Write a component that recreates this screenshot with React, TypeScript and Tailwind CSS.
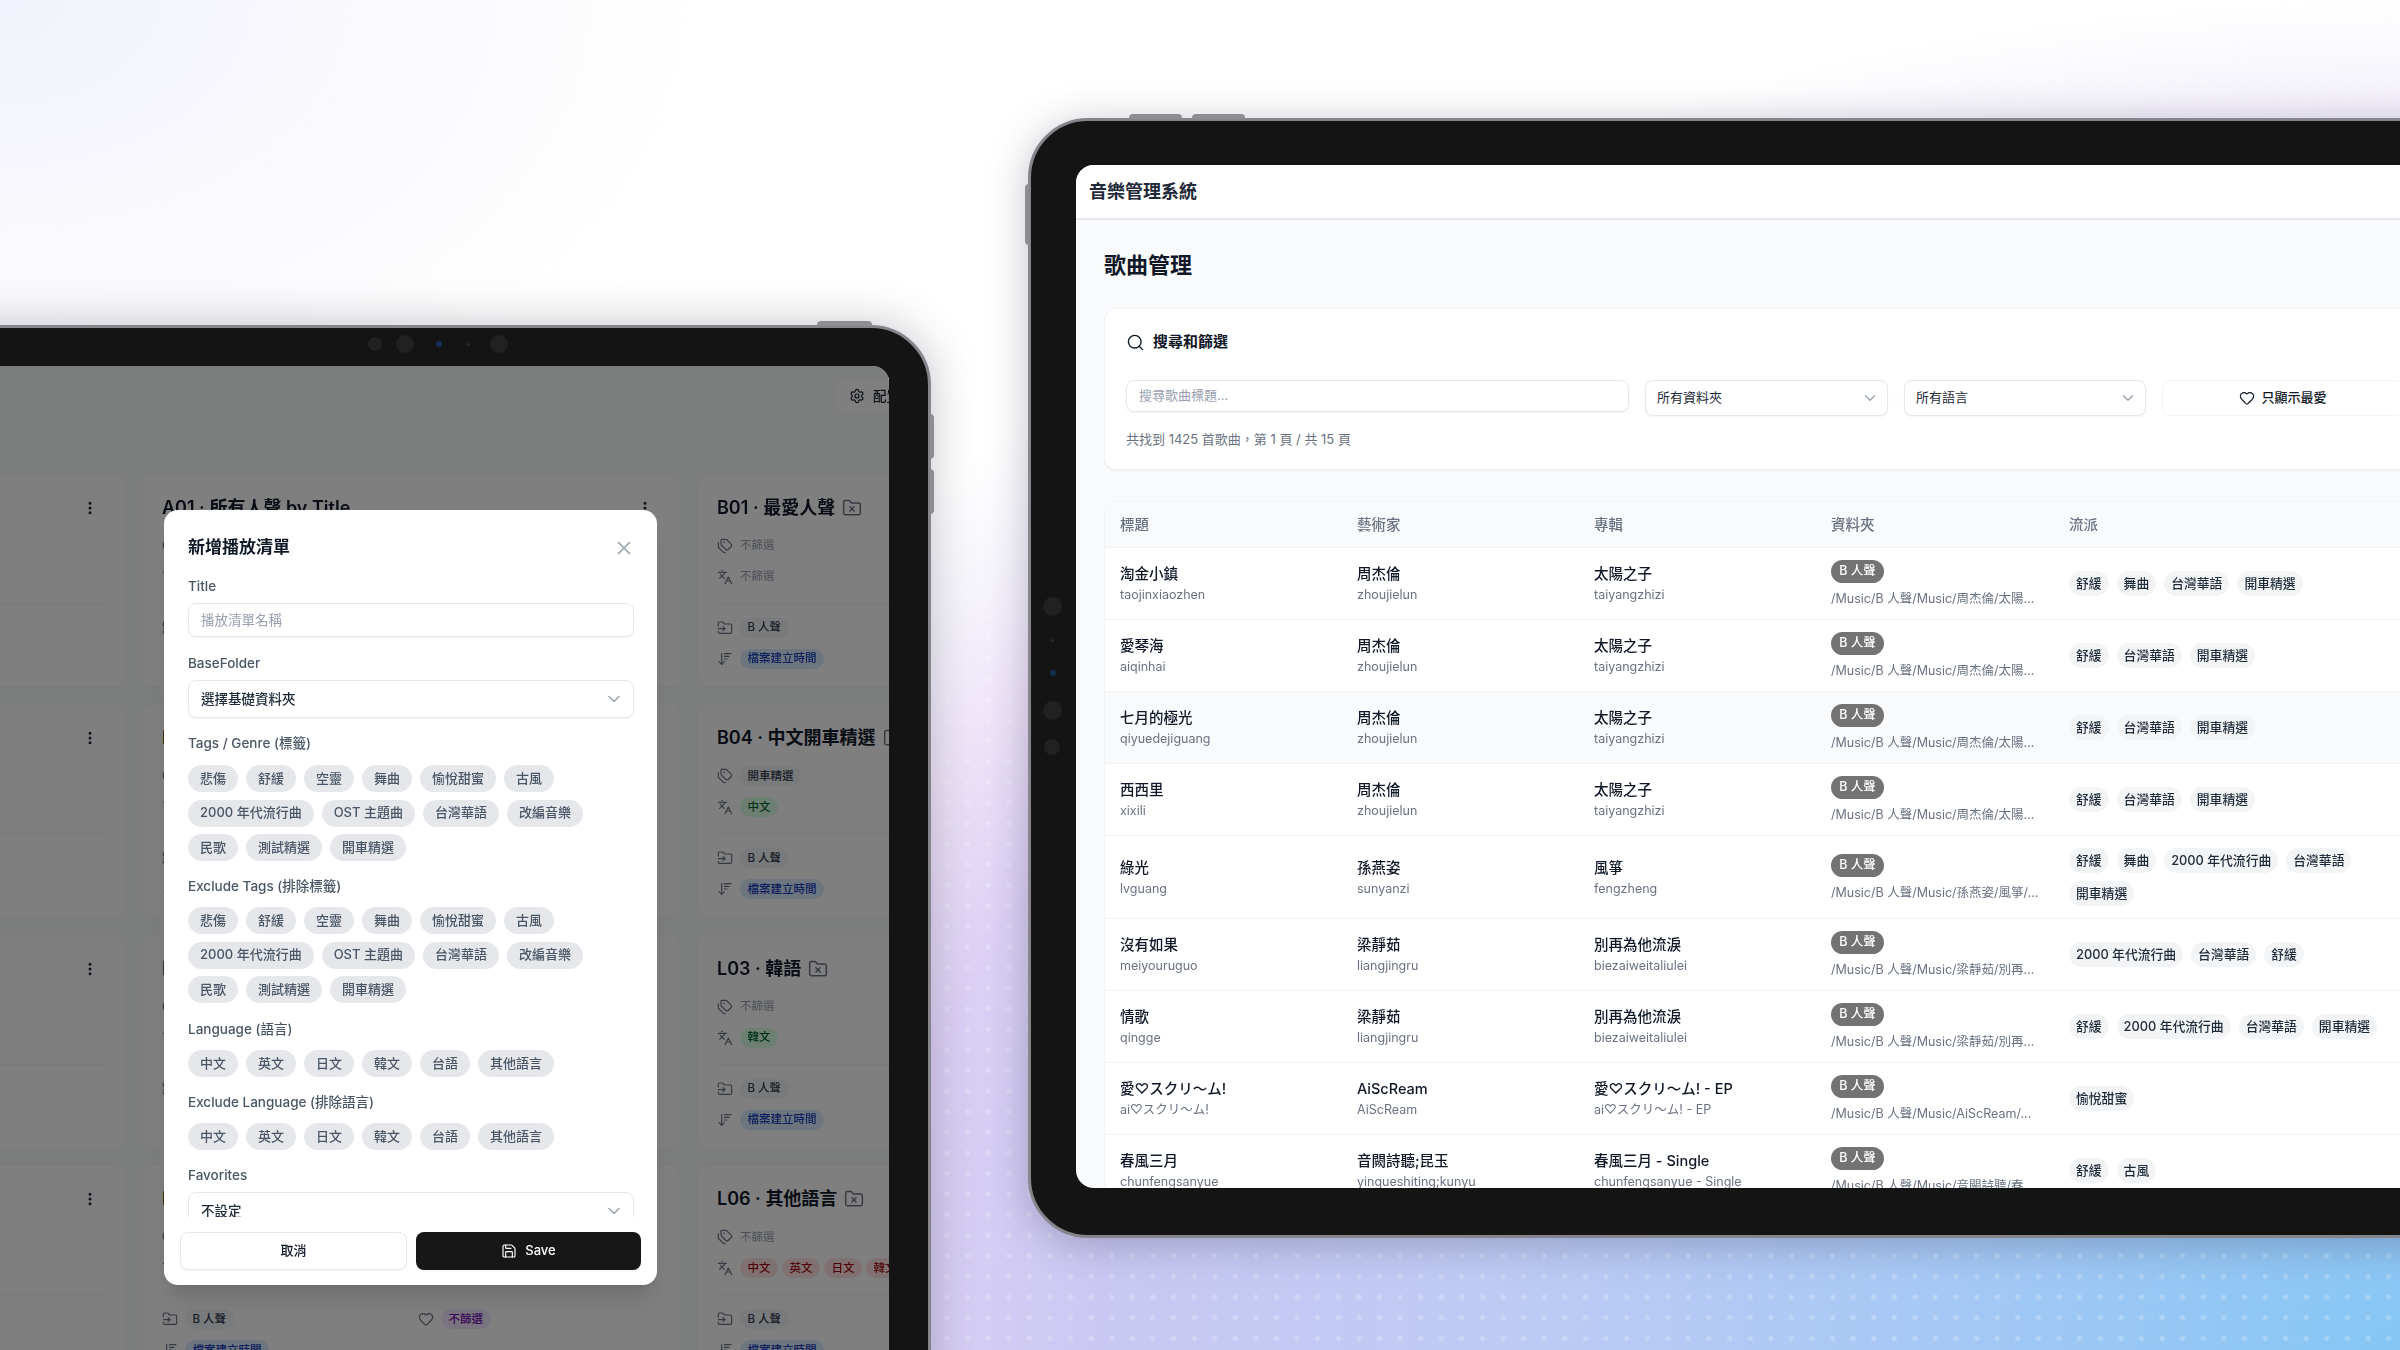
import {
  ArrowDownWideNarrow,
  ChevronDown,
  EllipsisVertical,
  FolderInput,
  FolderX,
  Heart,
  Languages,
  Save,
  Search,
  Settings,
  Tags,
  X,
} from "lucide-react";

type Tone = "gray" | "blue" | "green" | "red" | "purple";

const toneClass: Record<Tone, string> = {
  gray: "bg-gray-100 text-gray-700",
  blue: "bg-blue-100 text-blue-800",
  green: "bg-green-100 text-green-800",
  red: "bg-red-100 text-red-800",
  purple: "bg-purple-100 text-purple-800",
};

function Pill({ tone = "gray", children }: { tone?: Tone; children: string }) {
  return (
    <span className={`flex h-5 shrink-0 items-center rounded-full px-[7.5px] text-[11.5px] font-medium whitespace-nowrap ${toneClass[tone]}`}>
      {children}
    </span>
  );
}

interface PlaylistCard {
  title?: string;
  noFolder?: boolean;
  tags?: { label: string; tone: Tone }[];
  langs?: { label: string; tone: Tone }[];
}

function FilterValue({ items }: { items?: { label: string; tone: Tone }[] }) {
  if (!items) return <span className="text-[11.5px] text-gray-400">不篩選</span>;
  return (
    <div className="flex gap-1">
      {items.map((i) => (
        <Pill key={i.label} tone={i.tone}>{i.label}</Pill>
      ))}
    </div>
  );
}

function Playlist({ card }: { card: PlaylistCard }) {
  return (
    <div className="h-[215px] rounded-xl border border-gray-100 bg-white px-[19px] pt-5">
      <div className="flex h-7 items-center justify-between">
        <div className="flex items-center gap-[7px]">
          <span className="text-lg leading-7 font-semibold whitespace-nowrap text-gray-900">{card.title}</span>
          {card.noFolder && <FolderX className="h-5 w-5 shrink-0 text-gray-500" strokeWidth={1.75} />}
        </div>
        {!card.noFolder && <EllipsisVertical className="mr-2 h-4 w-4 text-gray-800" strokeWidth={2.5} />}
      </div>
      <div className="mt-[14px] flex h-5 items-center gap-[7px]">
        <Tags className="h-4 w-4 shrink-0 text-gray-500" strokeWidth={1.75} />
        <FilterValue items={card.tags} />
      </div>
      <div className="mt-[11px] flex h-5 items-center gap-[7px]">
        <Languages className="h-4 w-4 shrink-0 text-gray-500" strokeWidth={1.75} />
        <FilterValue items={card.langs} />
      </div>
      <div className="mt-4 border-t border-gray-100" />
      <div className="mt-[14px] grid grid-cols-[241px_241px] gap-x-[15px] gap-y-[11px]">
        <div className="flex h-5 items-center gap-[7px]">
          <FolderInput className="h-4 w-4 shrink-0 text-gray-500" strokeWidth={1.75} />
          <Pill>B 人聲</Pill>
        </div>
        <div className="flex h-5 items-center gap-[7px]">
          <Heart className="h-4 w-4 shrink-0 text-gray-500" strokeWidth={1.75} />
          <Pill tone="purple">不篩選</Pill>
        </div>
        <div className="flex h-5 items-center gap-[7px]">
          <ArrowDownWideNarrow className="h-4 w-4 shrink-0 text-gray-500" strokeWidth={1.75} />
          <Pill tone="blue">檔案建立時間</Pill>
        </div>
      </div>
    </div>
  );
}

const gridCards: PlaylistCard[] = [
  {},
  { title: "A01 · 所有人聲 by Title" },
  { title: "B01 · 最愛人聲", noFolder: true },
  {},
  { title: "B02 · 最愛人聲" },
  {
    title: "B04 · 中文開車精選",
    noFolder: true,
    tags: [{ label: "開車精選", tone: "gray" }],
    langs: [{ label: "中文", tone: "green" }],
  },
  {},
  { title: "L02 · 英文" },
  { title: "L03 · 韓語", noFolder: true, langs: [{ label: "韓文", tone: "green" }] },
  {},
  { title: "L05 · 台語" },
  {
    title: "L06 · 其他語言",
    noFolder: true,
    langs: ["中文", "英文", "日文", "韓文"].map((label) => ({ label, tone: "red" as Tone })),
  },
];

const tagOptions = ["悲傷", "舒緩", "空靈", "舞曲", "愉悅甜蜜", "古風", "2000 年代流行曲", "OST 主題曲", "台灣華語", "改編音樂", "民歌", "測試精選", "開車精選"];
const langOptions = ["中文", "英文", "日文", "韓文", "台語", "其他語言"];

function ChipGroup({ items, className }: { items: string[]; className: string }) {
  return (
    <div className={`flex w-[446px] flex-wrap gap-x-2 gap-y-[7.5px] ${className}`}>
      {items.map((t) => (
        <span key={t} className="flex h-[27px] items-center rounded-full bg-gray-200 px-3 text-[13px] font-medium whitespace-nowrap text-gray-600">
          {t}
        </span>
      ))}
    </div>
  );
}

function FieldLabel({ children, className }: { children: string; className: string }) {
  return <div className={`h-5 text-[13.5px] leading-5 font-medium text-gray-600 ${className}`}>{children}</div>;
}

function DialogSelect({ value, className }: { value: string; className: string }) {
  return (
    <div className={`flex h-[38px] w-[446px] shrink-0 items-center justify-between rounded-lg border border-gray-200 bg-white pr-[9px] pl-3 text-[13.5px] font-medium text-gray-800 shadow-xs ${className}`}>
      <span>{value}</span>
      <ChevronDown className="h-5 w-5 text-gray-400" strokeWidth={1.75} />
    </div>
  );
}

function CreateDialog() {
  return (
    <div className="absolute top-[144px] left-[622px] flex h-[775px] w-[493px] flex-col overflow-hidden rounded-[14px] bg-white shadow-xl">
      <div className="h-[707px] overflow-hidden px-6 pt-6">
        <div className="flex h-7 items-center justify-between">
          <span className="text-[17px] font-semibold text-gray-900">新增播放清單</span>
          <X className="mr-[-2px] h-[22px] w-[22px] text-gray-400" strokeWidth={1.75} />
        </div>
        <FieldLabel className="mt-[14px]">Title</FieldLabel>
        <div className="mt-[7px] flex h-[34px] w-[446px] items-center rounded-lg border border-gray-200 bg-white px-3 text-[13.5px] text-gray-400 shadow-xs">播放清單名稱</div>
        <FieldLabel className="mt-4">BaseFolder</FieldLabel>
        <DialogSelect value="選擇基礎資料夾" className="mt-[7px]" />
        <FieldLabel className="mt-[15px]">Tags / Genre (標籤)</FieldLabel>
        <ChipGroup items={tagOptions} className="mt-3" />
        <FieldLabel className="mt-[15px]">Exclude Tags (排除標籤)</FieldLabel>
        <ChipGroup items={tagOptions} className="mt-[11px]" />
        <FieldLabel className="mt-4">Language (語言)</FieldLabel>
        <ChipGroup items={langOptions} className="mt-[11px]" />
        <FieldLabel className="mt-[15px]">Exclude Language (排除語言)</FieldLabel>
        <ChipGroup items={langOptions} className="mt-[11px]" />
        <FieldLabel className="mt-[15px]">Favorites</FieldLabel>
        <DialogSelect value="不設定" className="mt-[7px]" />
      </div>
      <div className="flex gap-[9px] px-4 pt-[15px]">
        <button className="flex h-[38px] flex-1 items-center justify-center rounded-lg border border-gray-200 bg-white text-[13px] font-medium text-gray-900 shadow-xs">取消</button>
        <button className="flex h-[38px] flex-1 items-center justify-center gap-2 rounded-lg bg-neutral-900 text-[13px] font-medium text-white shadow-xs">
          <Save className="h-4 w-4" strokeWidth={1.75} />
          Save
        </button>
      </div>
    </div>
  );
}

function PlaylistTablet() {
  return (
    <div className="absolute top-[325px] left-[-500px] h-[1100px] w-[1431px] blur-[0.4px]">
      {/* hardware buttons */}
      <div className="absolute top-[-4px] left-[1317px] h-[5px] w-[55px] rounded-t-sm bg-[#8d8d94]" />
      <div className="absolute top-[89px] right-[-3px] h-[45px] w-1 rounded-r-sm bg-[#8d8d94]" />
      <div className="absolute top-[144px] right-[-3px] h-[45px] w-1 rounded-r-sm bg-[#8d8d94]" />
      <div className="h-full rounded-[60px] border-[3px] border-[#85858b] bg-[#141414] pt-[38px] pr-[39px] pl-[39px] shadow-[0_0_45px_rgba(40,40,60,0.28)]">
        <div className="relative h-[1100px] overflow-hidden rounded-[16px] bg-gray-50 pl-[45px]">
          <div className="mt-[11px] ml-[1247px] flex h-[38px] w-[120px] items-center gap-2 rounded-lg border border-gray-100 bg-white pl-[14px] text-[13.5px] font-medium whitespace-nowrap text-gray-900">
            <Settings className="h-4 w-4 shrink-0" strokeWidth={1.75} />
            配置管理
          </div>
          <div className="mt-[58px] grid w-[1649px] grid-cols-3 gap-x-4 gap-y-[15.4px]">
            {gridCards.map((c, i) => (
              <Playlist key={i} card={c} />
            ))}
          </div>
          <div className="absolute inset-0 bg-black/50" />
          <CreateDialog />
        </div>
      </div>
      {/* camera row on the top bezel */}
      <div className="absolute top-[12px] left-[868px] h-[14px] w-[14px] rounded-full bg-[#212121]" />
      <div className="absolute top-[10px] left-[896px] h-[18px] w-[18px] rounded-full bg-[#212121]" />
      <div className="absolute top-[16px] left-[936px] h-[6px] w-[6px] rounded-full bg-[#16304f]" />
      <div className="absolute top-[18px] left-[967px] h-[3px] w-[3px] rounded-full bg-[#2a2a2a]" />
      <div className="absolute top-[10px] left-[990px] h-[18px] w-[18px] rounded-full bg-[#212121]" />
    </div>
  );
}

interface Song {
  title: string;
  titlePy: string;
  artist: string;
  artistPy: string;
  album: string;
  albumPy: string;
  path: string;
  genres: string[];
  hover?: boolean;
}

const zhou = { artist: "周杰倫", artistPy: "zhoujielun", album: "太陽之子", albumPy: "taiyangzhizi", path: "/Music/B 人聲/Music/周杰倫/太陽..." };
const liang = { artist: "梁靜茹", artistPy: "liangjingru", album: "別再為他流淚", albumPy: "biezaiweitaliulei", path: "/Music/B 人聲/Music/梁靜茹/別再..." };

const songs: Song[] = [
  { title: "淘金小鎮", titlePy: "taojinxiaozhen", ...zhou, genres: ["舒緩", "舞曲", "台灣華語", "開車精選"] },
  { title: "愛琴海", titlePy: "aiqinhai", ...zhou, genres: ["舒緩", "台灣華語", "開車精選"] },
  { title: "七月的極光", titlePy: "qiyuedejiguang", ...zhou, genres: ["舒緩", "台灣華語", "開車精選"], hover: true },
  { title: "西西里", titlePy: "xixili", ...zhou, genres: ["舒緩", "台灣華語", "開車精選"] },
  { title: "綠光", titlePy: "lvguang", artist: "孫燕姿", artistPy: "sunyanzi", album: "風箏", albumPy: "fengzheng", path: "/Music/B 人聲/Music/孫燕姿/風箏/...", genres: ["舒緩", "舞曲", "2000 年代流行曲", "台灣華語", "開車精選"] },
  { title: "沒有如果", titlePy: "meiyouruguo", ...liang, genres: ["2000 年代流行曲", "台灣華語", "舒緩"] },
  { title: "情歌", titlePy: "qingge", ...liang, genres: ["舒緩", "2000 年代流行曲", "台灣華語", "開車精選"] },
  { title: "愛♡スクリ～ム!", titlePy: "ai♡スクリ～ム!", artist: "AiScReam", artistPy: "AiScReam", album: "愛♡スクリ～ム! - EP", albumPy: "ai♡スクリ～ム! - EP", path: "/Music/B 人聲/Music/AiScReam/...", genres: ["愉悅甜蜜"] },
  { title: "春風三月", titlePy: "chunfengsanyue", artist: "音闕詩聽;昆玉", artistPy: "yinqueshiting;kunyu", album: "春風三月 - Single", albumPy: "chunfengsanyue - Single", path: "/Music/B 人聲/Music/音闕詩聽/春...", genres: ["舒緩", "古風"] },
];

function TwoLine({ top, bottom }: { top: string; bottom: string }) {
  return (
    <div className="self-center pt-[2px] pl-[15px]">
      <div className="text-[14.5px] leading-5 font-medium whitespace-nowrap text-gray-900">{top}</div>
      <div className="mt-px text-[12.5px] leading-5 whitespace-nowrap text-gray-500">{bottom}</div>
    </div>
  );
}

const songGrid = "grid grid-cols-[237px_237px_238px_237px_1fr]";

function SongRow({ song }: { song: Song }) {
  return (
    <div className={`${songGrid} border-t border-gray-100 ${song.hover ? "bg-gray-50" : "bg-white"}`}>
      <TwoLine top={song.title} bottom={song.titlePy} />
      <TwoLine top={song.artist} bottom={song.artistPy} />
      <TwoLine top={song.album} bottom={song.albumPy} />
      <div className="self-center py-3 pl-[14px]">
        <span className="flex h-[23px] w-[53px] items-center justify-center rounded-full bg-neutral-500 text-[12.5px] font-medium text-white">B 人聲</span>
        <div className="mt-2 text-[12.5px] leading-4 whitespace-nowrap text-gray-500">{song.path}</div>
      </div>
      <div className="flex w-[356px] flex-wrap content-center gap-2 self-center py-3 pl-[15px]">
        {song.genres.map((g) => (
          <span key={g} className="flex h-[25px] items-center rounded-full bg-gray-100 px-[7px] text-[12.8px] font-medium whitespace-nowrap text-gray-800">
            {g}
          </span>
        ))}
      </div>
    </div>
  );
}

function FilterSelect({ label, width }: { label: string; width: string }) {
  return (
    <div className={`flex h-9 items-center justify-between rounded-lg border border-gray-200 bg-white pr-2 pl-[11px] text-[13px] text-gray-800 shadow-xs ${width}`}>
      <span>{label}</span>
      <ChevronDown className="h-[18px] w-[18px] text-gray-400" strokeWidth={1.75} />
    </div>
  );
}

function SongsTablet() {
  return (
    <div className="absolute top-[118px] left-[1028px] w-[1500px] blur-[0.4px]">
      <div className="absolute top-[-4px] left-[101px] h-[5px] w-[53px] rounded-t-sm bg-[#8d8d94]" />
      <div className="absolute top-[-4px] left-[164px] h-[5px] w-[53px] rounded-t-sm bg-[#8d8d94]" />
      <div className="absolute top-[66px] left-[-3px] h-[61px] w-1 rounded-l-sm bg-[#8d8d94]" />
      <div className="rounded-[60px] border-[3px] border-[#85858b] bg-[#141414] pt-[44px] pb-[47px] pl-[45px] shadow-[0_6px_40px_rgba(40,40,70,0.28)]">
        <div className="h-[1023px] overflow-hidden rounded-l-[18px] bg-gray-50">
          <div className="flex h-[55px] items-center border-b-2 border-gray-200 bg-white pl-[13px] text-lg font-semibold text-gray-800">音樂管理系統</div>
          <div className="pt-[29px] pl-7">
            <h1 className="text-[22px] leading-8 font-bold text-gray-900">歌曲管理</h1>
            <div className="mt-[27px] h-[162px] w-[1350px] rounded-xl border border-gray-100 bg-white pt-6 pl-[21px] shadow-xs">
              <div className="flex h-[18px] items-center gap-2 text-[15px] font-semibold text-gray-900">
                <Search className="h-[19px] w-[19px]" strokeWidth={1.75} />
                搜尋和篩選
              </div>
              <div className="mt-[29px] flex items-start gap-4">
                <div className="flex h-8 w-[503px] items-center rounded-lg border border-gray-200 bg-white px-3 text-[13px] text-gray-400 shadow-xs">搜尋歌曲標題...</div>
                <FilterSelect label="所有資料夾" width="w-[243px]" />
                <FilterSelect label="所有語言" width="w-[242px]" />
                <div className="flex h-9 w-[242px] items-center justify-center gap-[6px] rounded-lg border border-gray-100 bg-white text-[13px] font-medium text-gray-900">
                  <Heart className="h-4 w-4" strokeWidth={1.75} />
                  只顯示最愛
                </div>
              </div>
              <div className="mt-[14px] text-[13px] leading-[18px] text-gray-500">共找到 1425 首歌曲，第 1 頁 / 共 15 頁</div>
            </div>
            <div className="mt-[31px] w-[1350px] overflow-hidden rounded-xl border border-gray-100 bg-white">
              <div className={`${songGrid} h-[45px] items-center bg-gray-50 text-[14.5px] font-medium text-gray-500`}>
                <span className="pl-[15px]">標題</span>
                <span className="pl-[15px]">藝術家</span>
                <span className="pl-[15px]">專輯</span>
                <span className="pl-[14px]">資料夾</span>
                <span className="pl-[15px]">流派</span>
              </div>
              {songs.map((s) => (
                <SongRow key={s.title} song={s} />
              ))}
            </div>
          </div>
        </div>
      </div>
      {/* camera row on the left bezel */}
      <div className="absolute top-[479px] left-[15px] h-[19px] w-[19px] rounded-full bg-[#212121]" />
      <div className="absolute top-[521px] left-[23px] h-[3px] w-[3px] rounded-full bg-[#2a2a2a]" />
      <div className="absolute top-[552px] left-[22px] h-[6px] w-[6px] rounded-full bg-[#16304f]" />
      <div className="absolute top-[583px] left-[15px] h-[19px] w-[19px] rounded-full bg-[#212121]" />
      <div className="absolute top-[621px] left-[16px] h-4 w-4 rounded-full bg-[#212121]" />
    </div>
  );
}

export default function App() {
  return (
    <div className="relative h-[1350px] w-[2400px] overflow-hidden bg-[radial-gradient(79%_100%_at_100%_100%,#85c6f4_0%,#a8c8f5_26%,#bdcbf3_47%,#c9c8f2_68%,#dcd0f5_80%,#efe5f9_88%,#f7f5fc_94%,#ffffff_100%)] font-[family-name:Inter,'Noto_Sans_CJK_TC',sans-serif]">
      <div className="absolute inset-0 bg-[radial-gradient(circle,rgba(255,255,255,0.26)_0,rgba(255,255,255,0.2)_2px,transparent_3.5px)] bg-[length:20.6px_20.6px] bg-[position:10px_10px]" />
      <div className="absolute inset-0 bg-[radial-gradient(700px_460px_at_0_0,#f2f2fc_0%,rgba(242,242,252,0)_100%)]" />
      <PlaylistTablet />
      <SongsTablet />
    </div>
  );
}
